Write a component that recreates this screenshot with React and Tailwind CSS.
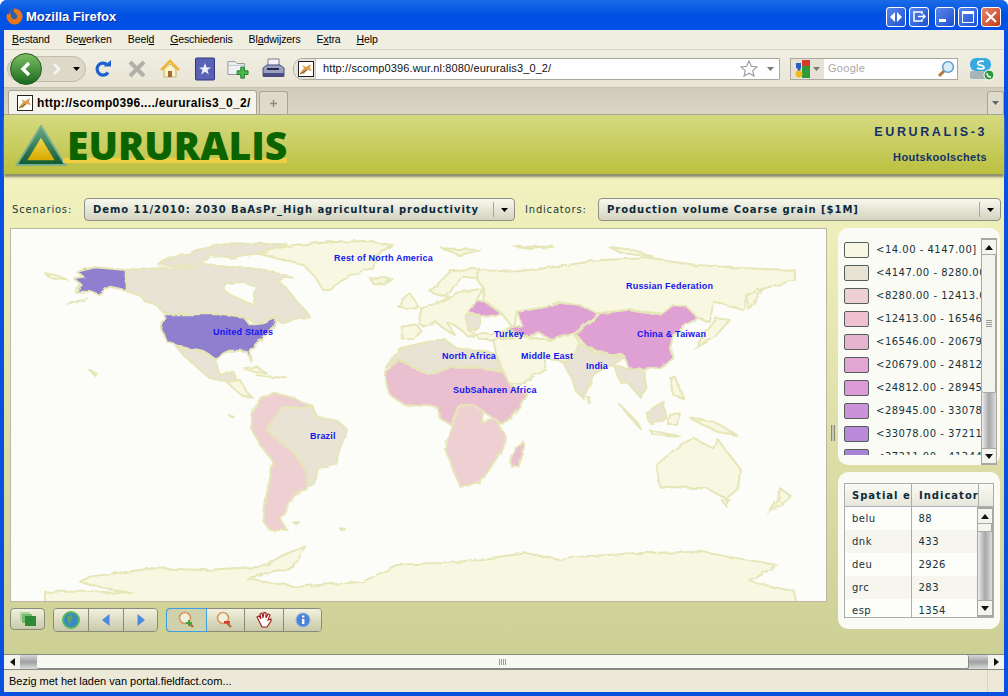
import React from "react";

const legend = [
  ["<14.00 - 4147.00]", "bg-[#f8f8e2]"],
  ["<4147.00 - 8280.00]", "bg-[#e8e3d4]"],
  ["<8280.00 - 12413.00]", "bg-[#eed0d2]"],
  ["<12413.00 - 16546.00]", "bg-[#eec0d0]"],
  ["<16546.00 - 20679.00]", "bg-[#e6b4cf]"],
  ["<20679.00 - 24812.00]", "bg-[#e3a5d3]"],
  ["<24812.00 - 28945.00]", "bg-[#dc9bd6]"],
  ["<28945.00 - 33078.00]", "bg-[#cc92d9]"],
  ["<33078.00 - 37211.00]", "bg-[#b98ad9]"],
  ["<37211.00 - 41344.00]", "bg-[#a884d4]"],
];

const rows = [
  ["belu", "88"],
  ["dnk", "433"],
  ["deu", "2926"],
  ["grc", "283"],
  ["esp", "1354"],
];

const labels = [
  ["Rest of North America", 334, 261],
  ["Russian Federation", 626, 289],
  ["United States", 213, 335],
  ["Turkey", 494, 337],
  ["China & Taiwan", 637, 337],
  ["North Africa", 442, 359],
  ["Middle East", 521, 359],
  ["India", 586, 369],
  ["SubSaharen Africa", 453, 393],
  ["Brazil", 310, 439],
];

const SEA = "#fcfcf8";
const PALE = "#f8f8e2";
const GREY = "#e8e3d4";
const PINK = "#eed0d2";
const PINK2 = "#eabfd0";
const VIOLET = "#8f7fcf";
const MAUVE = "#dfa0d4";

// coordinates are the 3x crop of the reference, scaled back by the group transform
const americas = [
  [PALE, "680,55 720,45 790,30 900,22 1000,18 1090,30 1050,45 1035,75 1030,100 990,110 960,125 930,140 900,165 880,165 855,125 820,90 780,80 740,70"],
  [GREY, "385,90 430,65 470,60 500,45 600,25 770,28 700,55 640,60 600,70 540,60 500,90 470,95"],
  [GREY, "287,105 390,100 480,100 520,85 590,95 660,100 720,110 785,125 740,135 770,160 800,200 825,225 840,245 800,250 760,265 730,250 690,270 640,245 580,238 405,238 385,215 345,200 330,180 287,165"],
  [SEA, "580,150 640,140 680,155 670,210 620,190 585,170"],
  [VIOLET, "140,110 195,97 287,105 287,165 240,155 205,178 185,170 135,170 155,150 130,130 160,125"],
  [VIOLET, "405,238 580,238 640,245 660,270 700,265 742,248 735,270 695,310 660,345 665,380 650,350 590,350 555,370 520,350 450,335 410,320 395,280"],
  [GREY, "440,335 520,352 555,372 570,420 610,410 620,440 590,440 540,430 500,395 460,360"],
  [PALE, "590,440 630,435 650,470 670,490 640,485 610,460"],
  [PINK, "690,490 730,470 790,490 850,515 760,520 735,545 710,585 750,620 790,650 830,710 830,755 790,785 770,820 750,850 770,885 720,885 700,860 710,780 730,680 690,630 660,575 670,530"],
  [GREY, "735,545 770,515 850,520 860,545 920,555 952,585 930,640 915,685 870,700 850,750 830,755 830,710 790,650 750,620 710,585"],
  [PALE, "1020,130 1085,130 1060,145 1030,145"],
  [PALE, "45,115 80,120 110,135 60,130"],
  [PALE, "640,400 680,395 710,415 670,410"],
  [PALE, "680,420 770,430 720,425"],
  [PALE, "110,210 170,190 130,205"],
  [PALE, "180,405 200,415 195,422"],
  [PALE, "600,543 612,545 606,548"],
  [PALE, "790,862 808,862 798,868"],
  [PALE, "930,880 945,882 935,885"],
];

const eurasia = [
  // Antarctica runs under both crops, so it is one polygon here
  [PALE, "-1005,1070 -850,1070 -745,1075 -870,1050 -900,1040 -870,1025 -680,1000 -530,1005 -350,995 -290,960 -225,935 -260,1000 -400,1030 -250,1055 -50,1040 50,990 150,985 200,985 440,955 540,975 600,965 760,955 960,950 1190,990 1110,1040 1245,1070 1248,1110 -1005,1110"],
  [PALE, "310,160 290,130 300,105 400,110 530,95 660,75 800,70 950,90 1100,100 1245,105 1245,135 1170,155 1100,180 1090,225 1000,200 990,260 950,250 920,215 880,210 840,235 740,225 650,235 540,200 500,215 415,230 400,280 365,235 310,195"],
  [PALE, "150,170 175,145 210,110 270,100 300,105 290,130 250,125 225,150 200,185 175,180"],
  [PALE, "115,262 125,220 170,205 200,190 250,170 310,160 290,195 265,235 258,240 265,285 290,300 265,305 250,290 215,265 200,260 225,300 205,290 165,260 130,275"],
  [PALE, "65,275 110,268 125,290 100,310 65,310"],
  [PALE, "55,215 90,175 115,215 80,220"],
  [MAUVE, "265,235 290,195 315,200 365,235 320,245 300,240"],
  [GREY, "258,240 300,240 300,280 265,285"],
  [PALE, "290,300 340,295 385,285 400,300 340,315 300,315"],
  [PALE, "340,315 430,305 515,315 580,295 600,325 560,385 500,370 495,400 420,450 385,445 350,365"],
  [MAUVE, "415,230 500,215 540,200 610,215 655,235 620,265 585,295 515,315 480,295 430,305 380,280 425,270"],
  [MAUVE, "585,295 630,265 660,235 740,225 840,240 880,210 920,215 955,250 925,265 880,300 870,340 880,370 850,395 790,405 745,400 730,360 690,360 620,335"],
  [GREY, "600,325 640,350 690,360 730,365 700,390 670,400 640,420 610,490 590,470 570,420 550,385 565,380"],
  [GREY, "700,390 745,400 790,405 800,460 780,485 740,440 720,440"],
  [GREY, "15,400 60,340 190,310 230,340 340,355 385,445 370,410 290,395 210,395 150,420 60,375"],
  [PINK2, "15,440 15,410 60,378 150,420 210,398 290,398 370,410 390,450 440,475 415,520 370,570 310,530 280,510 235,515 215,570 180,550 170,515 75,510 30,480"],
  [PINK, "215,570 235,515 280,510 310,530 305,560 345,550 375,600 370,640 330,700 300,745 240,755 210,680 195,640"],
  [PINK2, "395,660 430,620 435,640 415,695 395,695"],
  [PALE, "830,690 900,630 940,610 1000,640 1010,610 1080,700 1075,760 1040,790 980,760 840,755"],
  [PALE, "720,510 770,560 780,580 745,540"],
  [GREY, "800,530 850,500 860,550 810,565"],
  [PALE, "870,540 900,535 890,570 865,570"],
  [PALE, "930,550 1000,560 1070,600 1010,590"],
  [PALE, "810,585 900,605 820,600"],
  [PALE, "870,430 885,425 910,490 880,480"],
  [PALE, "980,290 1010,250 1050,255 1000,310 945,340 975,305"],
  [PALE, "1200,760 1235,785 1165,835 1195,795"],
  [PALE, "1100,180 1150,160 1105,225"],
  [PALE, "1025,795 1050,795 1040,815"],
  [PALE, "620,485 632,490 628,505"],
  [PALE, "185,40 300,45 240,60"],
  [PALE, "400,35 520,35 450,42"],
  [PALE, "685,35 760,45 820,65 730,55"],
];

function WorldMap() {
  return (
    <svg viewBox="11 229 815 372" className="block w-full h-full">
      <defs>
        <filter id="coast" filterUnits="userSpaceOnUse" x="11" y="229" width="815" height="372">
          <feTurbulence type="fractalNoise" baseFrequency="0.09" numOctaves="3" seed="4" />
          <feDisplacementMap in="SourceGraphic" scale="4.5" />
        </filter>
      </defs>
      <g filter="url(#coast)">
        <g transform="translate(30 235) scale(0.3333)" stroke="#e6e6b8" strokeWidth="6" strokeLinejoin="round">
          {americas.map(([fill, points], i) => (
            <polygon key={i} fill={fill} points={points} />
          ))}
        </g>
        <g transform="translate(380 235) scale(0.3333)" stroke="#e6e6b8" strokeWidth="6" strokeLinejoin="round">
          {eurasia.map(([fill, points], i) => (
            <polygon key={i} fill={fill} points={points} />
          ))}
        </g>
      </g>
      {labels.map(([text, x, y]) => (
        <text key={text} x={x} y={y} fill="#1414f0" fontFamily="Liberation Sans, sans-serif" fontWeight="700" fontSize="9" letterSpacing="0.2">
          {text}
        </text>
      ))}
    </svg>
  );
}

function WinButton({ red, children }) {
  return (
    <div
      className={
        red
          ? "w-[20px] h-[20px] rounded-[3px] border border-white flex items-center justify-center bg-gradient-to-br from-[#e8856a] to-[#c03a12]"
          : "w-[20px] h-[20px] rounded-[3px] border border-white flex items-center justify-center bg-gradient-to-br from-[#5b86ea] to-[#1c4fd0]"
      }
    >
      {children}
    </div>
  );
}

function Favicon() {
  return (
    <svg width="16" height="16" viewBox="0 0 16 16" className="shrink-0">
      <rect x="0.5" y="0.5" width="15" height="15" fill="#fff" stroke="#222" />
      <path d="M2 12 L6 7 L4 4 L8 6 L13 3 L12 7 L14 10 L9 9 L6 13 Z" fill="#d9a050" />
      <path d="M2 13 L9 9" stroke="#7a5a30" strokeWidth="1" />
    </svg>
  );
}

function TriDown({ className }) {
  return (
    <svg width="7" height="4" viewBox="0 0 7 4" className={className}>
      <path d="M0 0H7L3.5 4Z" fill="currentColor" />
    </svg>
  );
}

function NavIcons() {
  return (
    <>
      {/* reload */}
      <svg width="20" height="20" viewBox="0 0 20 20" className="ml-[7px] shrink-0">
        <path d="M15 13.5A6 6 0 1 1 14 5.5" fill="none" stroke="#1e62d0" strokeWidth="3.2" />
        <path d="M10.5 7.5H18V1Z" fill="#1e62d0" />
      </svg>
      {/* stop */}
      <svg width="20" height="20" viewBox="0 0 20 20" className="ml-[14px] shrink-0">
        <path d="M3 3L17 17M17 3L3 17" stroke="#b0b0a8" strokeWidth="4" />
      </svg>
      {/* home */}
      <svg width="20" height="20" viewBox="0 0 20 20" className="ml-[13px] shrink-0">
        <path d="M4 10V18H16V10L10 5Z" fill="#fdf3c8" stroke="#c9b070" />
        <path d="M1 11L10 2L19 11" fill="none" stroke="#eeb52a" strokeWidth="2.4" />
        <rect x="8" y="12" width="4" height="6" fill="#a8683a" />
      </svg>
      {/* bookmarks */}
      <svg width="20" height="24" viewBox="0 0 20 24" className="ml-[15px] shrink-0">
        <rect x="0.5" y="1" width="19" height="22" rx="1" fill="#5a62b4" stroke="#303680" />
        <path d="M10 6L11.6 10.4H16L12.5 13L13.8 17.5L10 14.8L6.2 17.5L7.5 13L4 10.4H8.4Z" fill="#eef0ff" />
      </svg>
      {/* new tab */}
      <svg width="22" height="22" viewBox="0 0 24 22" className="ml-[12px] shrink-0">
        <path d="M1 3H9L11 5H19V17H1Z" fill="#eef2f4" stroke="#8a9298" />
        <path d="M1 7H19" stroke="#b8c0c8" />
        <path d="M15 9H19V13H23V17H19V21H15V17H11V13H15Z" fill="#4ab84a" stroke="#1e7a28" />
      </svg>
      {/* print */}
      <svg width="24" height="22" viewBox="0 0 24 22" className="ml-[12px] shrink-0">
        <path d="M7 1H18V9H7Z" fill="#f4f4f8" stroke="#7a7a90" />
        <path d="M2 10L6 7H19L23 10V18H2Z" fill="#9aa0c0" stroke="#4a4e78" />
        <path d="M2 15H23V19H2Z" fill="#4a4e80" />
        <path d="M6 11H18" stroke="#26284a" strokeWidth="2" />
      </svg>
    </>
  );
}

function Scrollbar({ children }) {
  return <div className="relative flex flex-col shrink-0 w-[16px] bg-gradient-to-r from-[#ededed] via-[#a8a8a8] to-[#dcdcdc] border border-[#a8a8a0]">{children}</div>;
}

function ArrowBox({ dir }) {
  const path = dir === "up" ? "M0 5H8L4 0Z" : "M0 0H8L4 5Z";
  return (
    <div className="h-[16px] shrink-0 bg-[#f4f4ee] border-y border-[#a8a8a0] flex items-center justify-center">
      <svg width="8" height="5" viewBox="0 0 8 5">
        <path d={path} fill="#111" />
      </svg>
    </div>
  );
}

function ToolBtn({ active, children, className }) {
  return (
    <div
      className={
        "h-[22px] flex items-center justify-center " +
        (active
          ? "bg-[#cfd0ac] outline outline-1 outline-[#3d9fe0] z-10 "
          : "bg-gradient-to-b from-[#f2f1de] to-[#c9c9aa] ") +
        (className || "")
      }
    >
      {children}
    </div>
  );
}

function ComboBox({ text, className }) {
  return (
    <div className={"h-[23px] flex items-center rounded-[4px] border border-[#8d9086] bg-gradient-to-b from-[#f8f8ee] to-[#d4d4c0] " + className}>
      <span className="flex-1 pl-[8px] whitespace-nowrap font-['DejaVu_Sans',sans-serif] font-bold text-[10px] tracking-[0.95px] text-[#0c2a3c]">{text}</span>
      <span className="h-[15px] w-px bg-[#a8a89a]" />
      <span className="w-[20px] flex justify-center text-black">
        <TriDown />
      </span>
    </div>
  );
}

export default function App() {
  return (
    <div className="w-[1008px] h-[696px] bg-white">
      <div className="w-full h-full flex flex-col overflow-hidden rounded-t-[7px] bg-[#0a50e0] font-['Liberation_Sans',sans-serif]">
        {/* title bar */}
        <div className="h-[30px] shrink-0 flex items-center pl-[6px] pr-[2px] pt-[3px] bg-gradient-to-b from-[#1a6ae8] via-[#0050e0] to-[#0450ea]">
          <svg width="17" height="17" viewBox="0 0 16 16" className="shrink-0">
            <circle cx="8" cy="8" r="7.5" fill="#2f5fa8" />
            <path d="M8 .5A7.5 7.5 0 1 1 1 5.5C2 7 3 6 3.5 4.5 5 6 4 8 6 10 9 12 12 9 10 6 8 4 6 3 8 .5Z" fill="#e9761c" />
          </svg>
          <span className="ml-[3px] font-bold text-[13px] text-white [text-shadow:1px_1px_0_#0a2a90]">Mozilla Firefox</span>
          <div className="ml-auto flex mr-[5px]">
            <div className="flex gap-[3px] mr-[6px]">
              <WinButton>
                <svg width="12" height="10" viewBox="0 0 12 10"><path d="M5 0V10L0 5ZM7 0V10L12 5Z" fill="#fff" /></svg>
              </WinButton>
              <WinButton>
                <svg width="13" height="11" viewBox="0 0 13 11"><path d="M9 3V1H1V10H9V8M5 5.5H12M10 3.5L12 5.5L10 7.5" fill="none" stroke="#fff" strokeWidth="1.5" /></svg>
              </WinButton>
            </div>
            <div className="flex gap-[3px]">
              <WinButton>
                <div className="w-[7px] h-[3px] bg-white mt-[8px] mr-[5px]" />
              </WinButton>
              <WinButton>
                <div className="w-[12px] h-[12px] border border-white border-t-[3px]" />
              </WinButton>
              <WinButton red>
                <svg width="12" height="12" viewBox="0 0 12 12"><path d="M1 1L11 11M11 1L1 11" stroke="#fff" strokeWidth="2.2" /></svg>
              </WinButton>
            </div>
          </div>
        </div>

        <div className="flex-1 min-h-0 ml-[4px] mr-[4px] mb-[4px] flex flex-col bg-[#ece9d8]">
          {/* menu */}
          <div className="h-[20px] shrink-0 flex items-center gap-[16px] pl-[8px] text-[10.5px] tracking-[-0.1px] text-black bg-[#f0eee0] border-b border-[#d8d4c0]">
            <span><u>B</u>estand</span>
            <span>Be<u>w</u>erken</span>
            <span>Beel<u>d</u></span>
            <span><u>G</u>eschiedenis</span>
            <span>Bl<u>a</u>dwijzers</span>
            <span>E<u>x</u>tra</span>
            <span><u>H</u>elp</span>
          </div>

          {/* navigation */}
          <div className="h-[38px] shrink-0 flex items-center bg-gradient-to-b from-[#f1efe2] to-[#e8e5d6] border-b border-[#c8c4b0]">
            <div className="relative ml-[3px] w-[79px] h-[26px] rounded-full bg-[#dcd9c8] border border-[#c0bdac] flex items-center">
              <div className="absolute left-[2px] top-[-4px] w-[32px] h-[32px] rounded-full border border-[#245a20] bg-gradient-to-b from-[#7ac060] to-[#186a20] flex items-center justify-center">
                <svg width="14" height="16" viewBox="0 0 14 16"><path d="M10 2L4 8L10 14" fill="none" stroke="#fff" strokeWidth="3.4" /></svg>
              </div>
              <div className="ml-[38px] w-[22px] flex justify-center">
                <svg width="10" height="14" viewBox="0 0 10 14"><path d="M2 2L7 7L2 12" fill="none" stroke="#f4f4f0" strokeWidth="2.6" /></svg>
              </div>
              <TriDown className="ml-[5px] text-black" />
            </div>
            <NavIcons />
            {/* url bar */}
            <div className="ml-[8px] w-[487px] h-[22px] shrink-0 flex items-center rounded-l-[10px] border border-[#a8a89c] bg-white">
              <div className="w-[22px] h-full flex justify-end items-center pr-[1px] bg-[#e6e3d6] rounded-l-[10px] border-r border-[#d0cec0]">
                <Favicon />
              </div>
              <span className="ml-[7px] flex-1 text-[11px] tracking-[0.13px] text-[#111]">http://scomp0396.wur.nl:8080/eururalis3_0_2/</span>
              <svg width="18" height="17" viewBox="0 0 18 17">
                <path d="M9 1L11.3 6.3L17 6.9L12.7 10.6L14 16L9 13.2L4 16L5.3 10.6L1 6.9L6.7 6.3Z" fill="#fff" stroke="#9a9a9a" strokeWidth="1.1" />
              </svg>
              <TriDown className="ml-[9px] mr-[5px] text-[#777]" />
            </div>
            {/* search */}
            <div className="ml-[10px] w-[168px] h-[22px] shrink-0 flex items-center border border-[#a8a89c] bg-white">
              <div className="w-[33px] h-full flex items-center pl-[4px] bg-[#e6e3d6]">
                <svg width="16" height="18" viewBox="0 0 16 18">
                  <rect x="7" y="0" width="8" height="6" fill="#d83a2a" />
                  <rect x="1" y="3" width="5" height="5" fill="#2a5fc0" />
                  <rect x="7" y="6" width="8" height="12" fill="#2f9a3a" />
                  <circle cx="4" cy="14" r="3.4" fill="#f0b818" />
                  <circle cx="4" cy="9" r="1.8" fill="#2a5fc0" />
                </svg>
                <TriDown className="ml-[2px] text-[#777]" />
              </div>
              <span className="ml-[4px] flex-1 text-[11px] tracking-[0.3px] text-[#a8a8a8]">Google</span>
              <svg width="18" height="18" viewBox="0 0 18 18" className="mr-[2px]">
                <path d="M7 11L2 16" stroke="#b07a3a" strokeWidth="3" />
                <circle cx="11" cy="7" r="5.4" fill="#d8ecfa" stroke="#5a98c8" strokeWidth="1.4" />
              </svg>
            </div>
            <svg width="25" height="24" viewBox="0 0 25 24" className="ml-[11px] shrink-0">
              <rect x="1" y="1" width="21" height="13" rx="6" fill="#38a8e0" />
              <rect x="1" y="14" width="17" height="8" rx="2" fill="#a8b4b8" />
              <circle cx="20" cy="18" r="5" fill="#2a9a3a" stroke="#fff" />
              <path d="M18 16C18 19 20 20 22 20" stroke="#fff" strokeWidth="1.4" fill="none" />
              <path d="M15 4.5C11 3.5 8 5 9 7C10 9 15 8 15 10.500C15 12 11 12.500 8 11" stroke="#fff" strokeWidth="1.8" fill="none" />
            </svg>
          </div>

          {/* tabs */}
          <div className="h-[27px] shrink-0 flex items-end pl-[4px] bg-gradient-to-b from-[#cfccbb] to-[#d9d6c6] border-b border-[#a8a596]">
            <div className="w-[249px] h-[24px] flex items-center pl-[8px] gap-[4px] rounded-t-[3px] border border-b-0 border-[#a8a596] bg-[#f5f3e8]">
              <Favicon />
              <span className="font-bold text-[12px] tracking-[0.3px] text-black whitespace-nowrap">http://scomp0396..../eururalis3_0_2/</span>
            </div>
            <div className="ml-[2px] w-[29px] h-[23px] flex items-center justify-center rounded-t-[3px] border border-b-0 border-[#a8a596] bg-[#dedbcb]">
              <svg width="7" height="7" viewBox="0 0 7 7"><path d="M3.500 0V7M0 3.500H7" stroke="#8a8a80" strokeWidth="1.4" /></svg>
            </div>
            <div className="ml-auto w-[17px] h-[23px] flex items-center justify-center rounded-t-[3px] border border-b-0 border-[#a8a596] bg-[#dedbcb] text-[#666]">
              <TriDown />
            </div>
          </div>

          {/* page */}
          <div className="flex-1 min-h-0 flex flex-col bg-gradient-to-b from-[#f6f6c4] to-[#cdd095]">
            <div className="h-[59px] shrink-0 flex items-start bg-gradient-to-b from-[#d6da80] to-[#bbc03c] shadow-[0_3px_2px_#8c8c70]">
              <svg width="52" height="41" viewBox="0 0 52 42" className="ml-[11px] mt-[10px] shrink-0">
                <defs>
                  <linearGradient id="tri" x1="0" y1="0" x2="0" y2="1">
                    <stop offset="0" stopColor="#f0d850" />
                    <stop offset="1" stopColor="#d8a800" />
                  </linearGradient>
                  <linearGradient id="triOuter" x1="0" y1="0" x2="0" y2="1">
                    <stop offset="0" stopColor="#6aa88a" />
                    <stop offset="1" stopColor="#0e5a30" />
                  </linearGradient>
                </defs>
                <path d="M26 1L1 41H51Z" fill="url(#triOuter)" stroke="#7ab090" strokeWidth="2" />
                <path d="M26 13L12 36H40Z" fill="url(#tri)" />
              </svg>
              <div className="relative mt-[8px]">
                <div className="absolute left-[-4px] right-0 top-[35px] h-[5px] bg-[#f0cf40]" />
                <span className="relative block font-['Open_Sans',sans-serif] font-extrabold text-[39px] leading-[44px] text-[#0c6400]">EURURALIS</span>
              </div>
              <div className="ml-auto mr-[17px] mt-[10px] flex flex-col items-end font-bold text-[#14306c]">
                <span className="text-[12.5px] tracking-[2.6px] leading-[15px]">EURURALIS-3</span>
                <span className="text-[11px] tracking-[0.35px] mt-[9px]">Houtskoolschets</span>
              </div>
            </div>

            <div className="flex-1 min-h-0 flex flex-col pl-[6px] pr-[3px] pt-[24px]">
              <div className="h-[23px] shrink-0 flex items-center text-[10px] font-['DejaVu_Sans',sans-serif] tracking-[0.8px] text-[#1c3a3c]">
                <span className="ml-[2px] w-[72px]">Scenarios:</span>
                <ComboBox text="Demo 11/2010: 2030 BaAsPr_High agricultural productivity" className="w-[431px]" />
                <span className="ml-[10px] w-[73px]">Indicators:</span>
                <ComboBox text="Production volume Coarse grain [$1M]" className="w-[403px]" />
              </div>

              <div className="h-[402px] shrink-0 mt-[7px] flex">
                <div className="flex flex-col w-[817px]">
                  <div className="h-[374px] shrink-0 bg-[#fcfcf8] border border-[#b8b8a4]">
                    <WorldMap />
                  </div>
                  <div className="mt-[6px] flex gap-[8px]">
                    <div className="w-[35px] h-[22px] rounded-[4px] border border-[#8a8a7a] bg-gradient-to-b from-[#f2f1de] to-[#c9c9aa] flex items-center justify-center">
                      <svg width="16" height="14" viewBox="0 0 16 14">
                        <rect x="0" y="0" width="10" height="9" fill="#a8d8a0" />
                        <rect x="2" y="2" width="10" height="9" fill="#78b870" />
                        <rect x="5" y="4" width="11" height="10" fill="#2f8a38" />
                      </svg>
                    </div>
                    <div className="flex rounded-[4px] border border-[#8a8a7a] overflow-hidden">
                      <ToolBtn className="w-[35px] border-r border-[#8a8a7a]">
                        <svg width="18" height="18" viewBox="0 0 18 18">
                          <circle cx="9" cy="9" r="8" fill="#3a88c8" stroke="#5ab85a" strokeWidth="2" />
                          <path d="M5 5L10 4L11 8L8 10L9 14L6 11Z" fill="#5aa85a" />
                        </svg>
                      </ToolBtn>
                      <ToolBtn className="w-[35px] border-r border-[#8a8a7a]">
                        <svg width="8" height="12" viewBox="0 0 8 12"><path d="M7.500 0V12L0 6Z" fill="#4a8ae0" /></svg>
                      </ToolBtn>
                      <ToolBtn className="w-[33px]">
                        <svg width="8" height="12" viewBox="0 0 8 12"><path d="M.5 0V12L8 6Z" fill="#4a8ae0" /></svg>
                      </ToolBtn>
                    </div>
                    <div className="flex rounded-[4px] border border-[#8a8a7a]">
                      <ToolBtn active className="w-[39px] rounded-l-[3px]">
                        <svg width="18" height="18" viewBox="0 0 18 18">
                          <path d="M10 11L15 16" stroke="#a8703a" strokeWidth="2.400" />
                          <circle cx="7" cy="7" r="5.5" fill="#f0f0e0" stroke="#d89a58" strokeWidth="1.600" />
                          <path d="M10 9H12V11H14V13H12V15H10V13H8V11H10Z" fill="#3aa83a" />
                        </svg>
                      </ToolBtn>
                      <ToolBtn className="w-[39px] border-r border-[#8a8a7a]">
                        <svg width="18" height="18" viewBox="0 0 18 18">
                          <path d="M10 11L15 16" stroke="#a8703a" strokeWidth="2.400" />
                          <circle cx="7" cy="7" r="5.5" fill="#f0f0e0" stroke="#d89a58" strokeWidth="1.600" />
                          <rect x="8" y="10" width="6" height="2.500" fill="#d83838" />
                        </svg>
                      </ToolBtn>
                      <ToolBtn className="w-[39px] border-r border-[#8a8a7a]">
                        <svg width="18" height="18" viewBox="0 0 18 18">
                          <path d="M4 10L2 6L4 5L6 8L5 3L7 2L8 7L9 1.500L11 2L11 7L13 3L15 4L13 9L16 8L16 10L12 16H7Z" fill="#fff" stroke="#a01818" strokeWidth="1.100" />
                        </svg>
                      </ToolBtn>
                      <ToolBtn className="w-[37px] rounded-r-[3px]">
                        <svg width="16" height="16" viewBox="0 0 16 16">
                          <circle cx="8" cy="8" r="7" fill="#4a84d8" stroke="#9ab8e0" />
                          <rect x="7" y="7" width="2.400" height="5" fill="#fff" />
                          <rect x="7" y="3.500" width="2.400" height="2" fill="#fff" />
                        </svg>
                      </ToolBtn>
                    </div>
                  </div>
                </div>

                {/* splitter */}
                <div className="w-[11px] shrink-0 flex items-center justify-center pt-[8px]">
                  <div className="w-[4px] h-[16px] border-x border-[#8a8a7a] bg-[#c8c8b0]" />
                </div>

                <div className="w-[162px] shrink-0 flex flex-col gap-[7px]">
                  {/* legend */}
                  <div className="h-[237px] shrink-0 flex rounded-[10px] bg-[#fbfbf6] pl-[6px] pr-[3px] pt-[10px]">
                    <div className="flex-1 min-w-0 h-[217px] overflow-hidden">
                      {legend.map(([text, swatch]) => (
                        <div key={text} className="h-[23px] flex items-center">
                          <div className={"w-[25px] h-[16px] shrink-0 rounded-[2px] border border-[#55605c] " + swatch} />
                          <span className="ml-[7px] whitespace-nowrap font-['DejaVu_Sans',sans-serif] text-[10px] tracking-[0.5px] text-[#15333a]">{text}</span>
                        </div>
                      ))}
                    </div>
                    <Scrollbar>
                      <ArrowBox dir="up" />
                      <div className="h-[138px] shrink-0 rounded-[2px] border-b border-r border-[#a8a8a0] bg-[#f4f4ee] flex flex-col items-center justify-center gap-px">
                        <div className="w-[6px] h-px bg-[#999]" />
                        <div className="w-[6px] h-px bg-[#999]" />
                        <div className="w-[6px] h-px bg-[#999]" />
                        <div className="w-[6px] h-px bg-[#999]" />
                      </div>
                      <div className="flex-1" />
                      <ArrowBox dir="down" />
                    </Scrollbar>
                  </div>

                  {/* table */}
                  <div className="h-[157px] shrink-0 rounded-[10px] bg-[#fbfbf6] pl-[6px] pr-[6px] pt-[11px]">
                    <div className="h-[135px] flex flex-col border border-[#a8aeae] overflow-hidden">
                      <div className="h-[23px] shrink-0 flex border-b border-[#a8b0b8] bg-gradient-to-b from-[#fbfbf6] to-[#e6e6da] font-['DejaVu_Sans',sans-serif] font-bold text-[10px] tracking-[1px] text-[#0c2a3c]">
                        <div className="w-[67px] pl-[7px] flex items-center overflow-hidden whitespace-nowrap border-r border-[#a8aeae]">Spatial entity</div>
                        <div className="w-[67px] pl-[7px] flex items-center overflow-hidden whitespace-nowrap border-r border-[#a8aeae]">Indicator</div>
                      </div>
                      <div className="flex-1 min-h-0 flex">
                        <div className="w-[133px] overflow-hidden font-['DejaVu_Sans',sans-serif] text-[10px] tracking-[0.5px] text-[#15333a]">
                          {rows.map(([name, value], i) => (
                            <div key={name} className={i % 2 ? "h-[23px] flex items-center bg-[#f6f6ee]" : "h-[23px] flex items-center bg-[#fdfdf9]"}>
                              <div className="w-[67px] h-full pl-[7px] flex items-center border-r border-[#a8aeae]">{name}</div>
                              <div className="w-[66px] h-full pl-[7px] flex items-center">{value}</div>
                            </div>
                          ))}
                        </div>
                        <Scrollbar>
                          <ArrowBox dir="up" />
                          <div className="h-[8px] shrink-0 bg-[#f4f4ee] border-b border-r border-[#a8a8a0]" />
                          <div className="flex-1" />
                          <ArrowBox dir="down" />
                        </Scrollbar>
                      </div>
                    </div>
                  </div>
                </div>
              </div>
            </div>
          </div>

          {/* horizontal page scrollbar */}
          <div className="h-[16px] shrink-0 flex bg-gradient-to-b from-[#d8d8d8] via-[#a0a0a0] to-[#dcdcdc] border-y border-[#8a8a84]">
            <div className="w-[16px] flex items-center justify-center bg-[#f4f4ee]">
              <svg width="5" height="8" viewBox="0 0 5 8"><path d="M5 0V8L0 4Z" fill="#111" /></svg>
            </div>
            <div className="ml-[17px] w-[932px] rounded-[2px] border-r border-b border-[#8a8a84] bg-[#f8f8f2] flex items-center justify-center gap-px">
              <div className="w-px h-[6px] bg-[#999]" />
              <div className="w-px h-[6px] bg-[#999]" />
              <div className="w-px h-[6px] bg-[#999]" />
              <div className="w-px h-[6px] bg-[#999]" />
            </div>
            <div className="ml-auto w-[16px] flex items-center justify-center bg-[#f4f4ee]">
              <svg width="5" height="8" viewBox="0 0 5 8"><path d="M0 0V8L5 4Z" fill="#111" /></svg>
            </div>
          </div>

          {/* status */}
          <div className="h-[22px] shrink-0 flex items-center pl-[5px] bg-[#ece9d8] text-[11px] text-black">
            <span>Bezig met het laden van portal.fieldfact.com...</span>
            <div className="ml-auto h-full w-[17px] border-l border-[#d8d4c0]" />
          </div>
        </div>
      </div>
    </div>
  );
}
